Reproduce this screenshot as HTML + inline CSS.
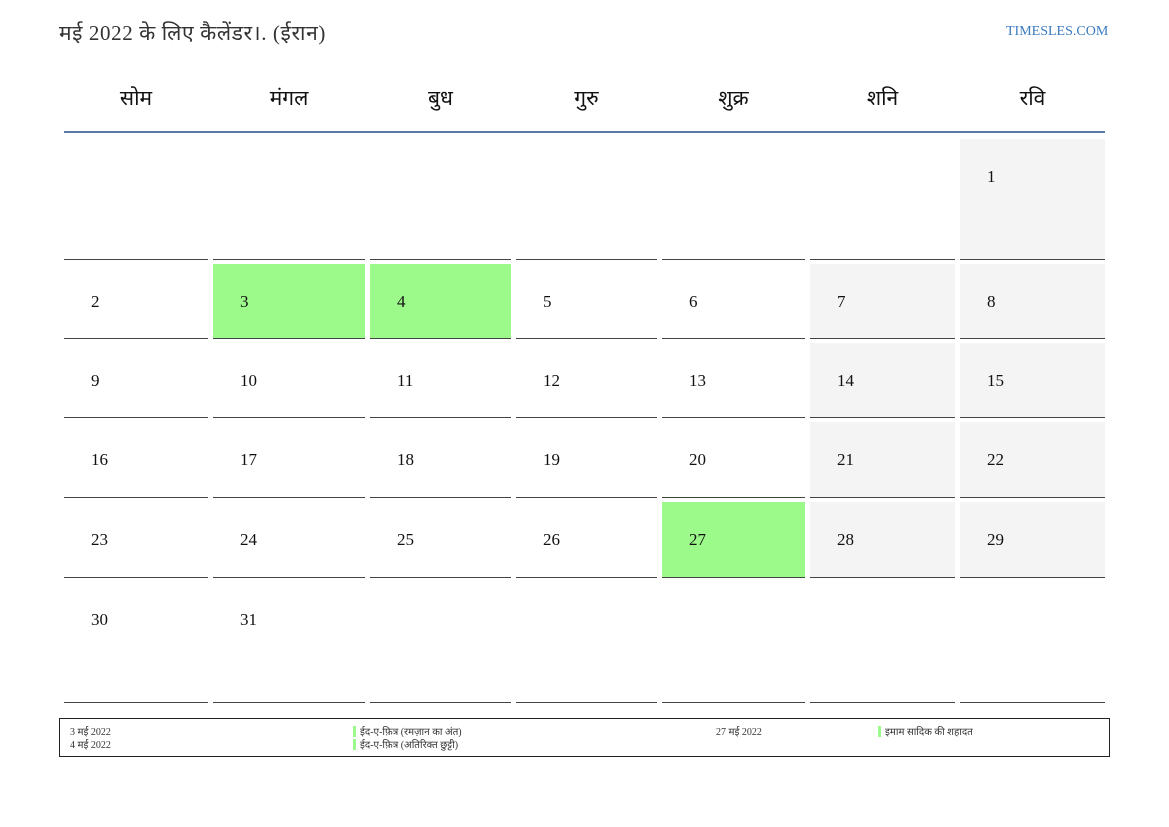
<!DOCTYPE html>
<html><head><meta charset="utf-8"><style>
body{margin:0;width:1169px;height:827px;background:#fff;position:relative;font-family:"Liberation Serif","Noto Serif CJK SC",serif;color:#111;overflow:hidden}
.a{position:absolute}
.title{left:59px;top:19px;font-size:21px;color:#333;letter-spacing:0.6px}
.site{left:1006px;top:24px;font-size:14px;color:#3a7abf}
.dh{top:84px;font-size:21px;text-align:center;font-weight:normal}
.hl{left:64px;top:131px;width:1041px;height:2px;background:#587aa5}
.c{position:absolute;border-bottom:1.5px solid #444;box-sizing:border-box;font-size:17px}
.c span{position:absolute;left:27px;top:28px}
.g{background:#f4f4f4}.gr{background:#9cfa8a}
.leg{left:59px;top:718px;width:1049px;height:37px;border:1.5px solid #222;font-size:10px;color:#333}
.bar{display:inline-block;width:3px;height:11px;background:#9cfa8a;vertical-align:-2px;margin-right:4px}
</style></head><body>
<div class="a title">मई 2022 के लिए कैलेंडर।. (ईरान)</div>
<div class="a site">TIMESLES.COM</div>
<div class="a dh" style="left:64px;width:144px">सोम</div>
<div class="a dh" style="left:213px;width:152px">मंगल</div>
<div class="a dh" style="left:370px;width:141px">बुध</div>
<div class="a dh" style="left:516px;width:141px">गुरु</div>
<div class="a dh" style="left:662px;width:143px">शुक्र</div>
<div class="a dh" style="left:810px;width:145px">शनि</div>
<div class="a dh" style="left:960px;width:145px">रवि</div>
<div class="a hl"></div>

<div class="c" style="left:64px;width:144px;top:139px;height:121px"></div>
<div class="c" style="left:213px;width:152px;top:139px;height:121px"></div>
<div class="c" style="left:370px;width:141px;top:139px;height:121px"></div>
<div class="c" style="left:516px;width:141px;top:139px;height:121px"></div>
<div class="c" style="left:662px;width:143px;top:139px;height:121px"></div>
<div class="c" style="left:810px;width:145px;top:139px;height:121px"></div>
<div class="c g" style="left:960px;width:145px;top:139px;height:121px"><span>1</span></div>

<div class="c" style="left:64px;width:144px;top:264px;height:75px"><span>2</span></div>
<div class="c gr" style="left:213px;width:152px;top:264px;height:75px"><span>3</span></div>
<div class="c gr" style="left:370px;width:141px;top:264px;height:75px"><span>4</span></div>
<div class="c" style="left:516px;width:141px;top:264px;height:75px"><span>5</span></div>
<div class="c" style="left:662px;width:143px;top:264px;height:75px"><span>6</span></div>
<div class="c g" style="left:810px;width:145px;top:264px;height:75px"><span>7</span></div>
<div class="c g" style="left:960px;width:145px;top:264px;height:75px"><span>8</span></div>

<div class="c" style="left:64px;width:144px;top:343px;height:75px"><span>9</span></div>
<div class="c" style="left:213px;width:152px;top:343px;height:75px"><span>10</span></div>
<div class="c" style="left:370px;width:141px;top:343px;height:75px"><span>11</span></div>
<div class="c" style="left:516px;width:141px;top:343px;height:75px"><span>12</span></div>
<div class="c" style="left:662px;width:143px;top:343px;height:75px"><span>13</span></div>
<div class="c g" style="left:810px;width:145px;top:343px;height:75px"><span>14</span></div>
<div class="c g" style="left:960px;width:145px;top:343px;height:75px"><span>15</span></div>

<div class="c" style="left:64px;width:144px;top:422px;height:76px"><span>16</span></div>
<div class="c" style="left:213px;width:152px;top:422px;height:76px"><span>17</span></div>
<div class="c" style="left:370px;width:141px;top:422px;height:76px"><span>18</span></div>
<div class="c" style="left:516px;width:141px;top:422px;height:76px"><span>19</span></div>
<div class="c" style="left:662px;width:143px;top:422px;height:76px"><span>20</span></div>
<div class="c g" style="left:810px;width:145px;top:422px;height:76px"><span>21</span></div>
<div class="c g" style="left:960px;width:145px;top:422px;height:76px"><span>22</span></div>

<div class="c" style="left:64px;width:144px;top:502px;height:76px"><span>23</span></div>
<div class="c" style="left:213px;width:152px;top:502px;height:76px"><span>24</span></div>
<div class="c" style="left:370px;width:141px;top:502px;height:76px"><span>25</span></div>
<div class="c" style="left:516px;width:141px;top:502px;height:76px"><span>26</span></div>
<div class="c gr" style="left:662px;width:143px;top:502px;height:76px"><span>27</span></div>
<div class="c g" style="left:810px;width:145px;top:502px;height:76px"><span>28</span></div>
<div class="c g" style="left:960px;width:145px;top:502px;height:76px"><span>29</span></div>

<div class="c" style="left:64px;width:144px;top:582px;height:121px"><span>30</span></div>
<div class="c" style="left:213px;width:152px;top:582px;height:121px"><span>31</span></div>
<div class="c" style="left:370px;width:141px;top:582px;height:121px"></div>
<div class="c" style="left:516px;width:141px;top:582px;height:121px"></div>
<div class="c" style="left:662px;width:143px;top:582px;height:121px"></div>
<div class="c" style="left:810px;width:145px;top:582px;height:121px"></div>
<div class="c" style="left:960px;width:145px;top:582px;height:121px"></div>

<div class="a leg">
 <div class="a" style="left:10px;top:5px">3 मई 2022</div>
 <div class="a" style="left:10px;top:18px">4 मई 2022</div>
 <div class="a" style="left:293px;top:5px"><i class="bar"></i>ईद-ए-फ़ित्र (रमज़ान का अंत)</div>
 <div class="a" style="left:293px;top:18px"><i class="bar"></i>ईद-ए-फ़ित्र (अतिरिक्त छुट्टी)</div>
 <div class="a" style="left:656px;top:5px">27 मई 2022</div>
 <div class="a" style="left:818px;top:5px"><i class="bar"></i>इमाम सादिक की शहादत</div>
</div>
</body></html>
